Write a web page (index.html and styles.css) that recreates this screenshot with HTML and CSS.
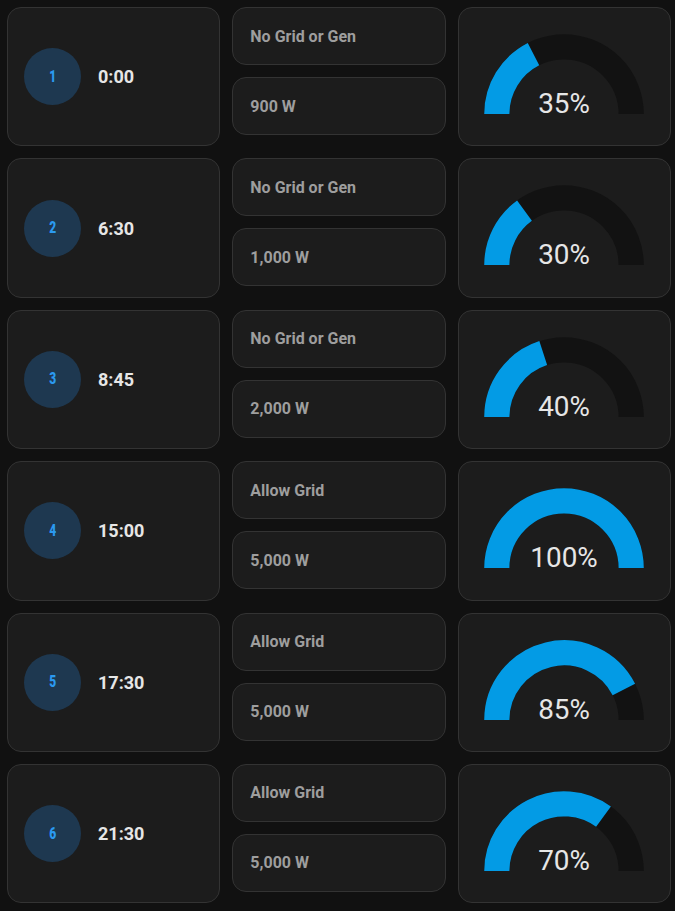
FILE: index.html
```html
<!DOCTYPE html>
<html>
<head>
<meta charset="utf-8">
<link rel="stylesheet" href="styles.css">
</head>
<body>
<div class="grid">
  <div class="card tile"><div class="badge"><span>1</span></div><div class="time">0:00</div></div>
  <div class="stack"><div class="card pill">No Grid or Gen</div><div class="card pill">900 W</div></div>
  <div class="card gauge-card"><svg class="gauge" viewBox="-50 -50 100 50"><path class="track" d="M -40 0 A 40 40 0 0 1 40 0"/><path class="value" d="M -40 0 A 40 40 0 0 1 -18.16 -35.64"/><text x="0" y="-0.5">35%</text></svg></div>

  <div class="card tile"><div class="badge"><span>2</span></div><div class="time">6:30</div></div>
  <div class="stack"><div class="card pill">No Grid or Gen</div><div class="card pill">1,000 W</div></div>
  <div class="card gauge-card"><svg class="gauge" viewBox="-50 -50 100 50"><path class="track" d="M -40 0 A 40 40 0 0 1 40 0"/><path class="value" d="M -40 0 A 40 40 0 0 1 -23.51 -32.36"/><text x="0" y="-0.5">30%</text></svg></div>

  <div class="card tile"><div class="badge"><span>3</span></div><div class="time">8:45</div></div>
  <div class="stack"><div class="card pill">No Grid or Gen</div><div class="card pill">2,000 W</div></div>
  <div class="card gauge-card"><svg class="gauge" viewBox="-50 -50 100 50"><path class="track" d="M -40 0 A 40 40 0 0 1 40 0"/><path class="value" d="M -40 0 A 40 40 0 0 1 -12.36 -38.04"/><text x="0" y="-0.5">40%</text></svg></div>

  <div class="card tile"><div class="badge"><span>4</span></div><div class="time">15:00</div></div>
  <div class="stack"><div class="card pill">Allow Grid</div><div class="card pill">5,000 W</div></div>
  <div class="card gauge-card"><svg class="gauge" viewBox="-50 -50 100 50"><path class="track" d="M -40 0 A 40 40 0 0 1 40 0"/><path class="value" d="M -40 0 A 40 40 0 0 1 40 0"/><text x="0" y="-0.5">100%</text></svg></div>

  <div class="card tile"><div class="badge"><span>5</span></div><div class="time">17:30</div></div>
  <div class="stack"><div class="card pill">Allow Grid</div><div class="card pill">5,000 W</div></div>
  <div class="card gauge-card"><svg class="gauge" viewBox="-50 -50 100 50"><path class="track" d="M -40 0 A 40 40 0 0 1 40 0"/><path class="value" d="M -40 0 A 40 40 0 0 1 35.64 -18.16"/><text x="0" y="-0.5">85%</text></svg></div>

  <div class="card tile"><div class="badge"><span>6</span></div><div class="time">21:30</div></div>
  <div class="stack"><div class="card pill">Allow Grid</div><div class="card pill">5,000 W</div></div>
  <div class="card gauge-card"><svg class="gauge" viewBox="-50 -50 100 50"><path class="track" d="M -40 0 A 40 40 0 0 1 40 0"/><path class="value" d="M -40 0 A 40 40 0 0 1 23.51 -32.36"/><text x="0" y="-0.5">70%</text></svg></div>
</div>
</body>
</html>
```

FILE: styles.css
```css
* { box-sizing: border-box; }
html, body {
  margin: 0;
  background: #111111;
  font-family: Roboto, "Liberation Sans", sans-serif;
}
body {
  padding: 7px 4px 0 7px;
}
.grid {
  display: grid;
  grid-template-columns: repeat(3, 1fr);
  grid-auto-rows: 139.4px;
  column-gap: 12px;
  row-gap: 12px;
}
.card {
  background: #1c1c1c;
  border: 1px solid #333333;
  border-radius: 14px;
}
.tile {
  display: flex;
  align-items: center;
  padding-left: 16px;
}
.badge {
  width: 57px;
  height: 57px;
  border-radius: 50%;
  background: #1e3850;
  display: flex;
  align-items: center;
  justify-content: center;
  flex-shrink: 0;
}
.badge span {
  display: inline-block;
  color: #2b9af0;
  font-weight: 900;
  font-size: 16px;
  line-height: 1;
  transform: scaleX(0.75);
}
.time {
  margin-left: 17px;
  color: #e6e6e6;
  font-weight: 700;
  font-size: 18px;
}
.stack {
  display: flex;
  flex-direction: column;
  gap: 12px;
}
.pill {
  height: 58px;
  display: flex;
  align-items: center;
  padding-left: 17px;
  color: #9e9e9e;
  font-weight: 700;
  font-size: 16px;
}
.gauge-card {
  display: flex;
  justify-content: center;
  align-items: flex-start;
  padding-top: 22px;
}
.gauge {
  width: 168px;
  height: 84px;
  display: block;
  overflow: visible;
}
.gauge path {
  fill: none;
  stroke-width: 15;
}
.gauge .track { stroke: #121212; }
.gauge .value { stroke: #039be5; }
.gauge text {
  fill: #e6e6e6;
  font-family: Roboto, "Liberation Sans", sans-serif;
  font-size: 16.6px;
  text-anchor: middle;
}
```
